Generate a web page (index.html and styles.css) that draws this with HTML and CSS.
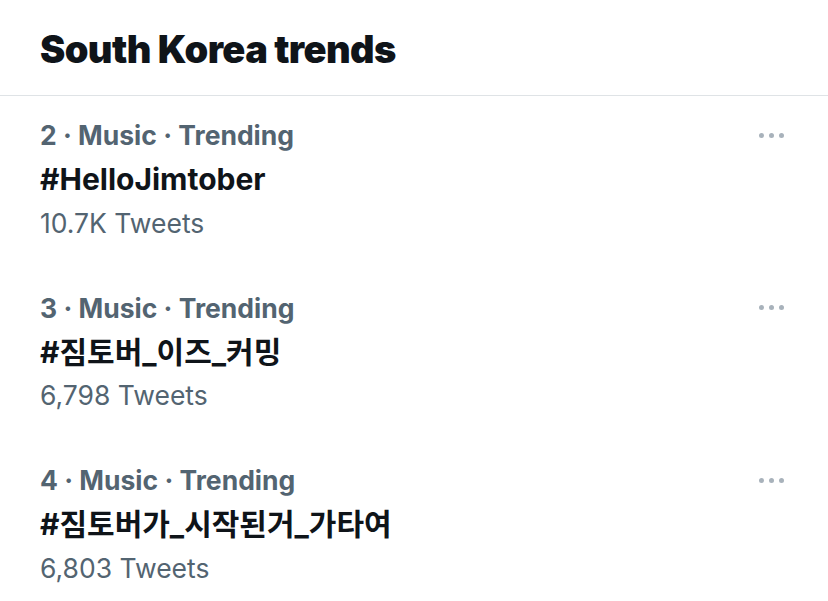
FILE: index.html
```html
<!DOCTYPE html>
<html lang="en">
<head>
<meta charset="utf-8">
<title>South Korea trends</title>
<link rel="stylesheet" href="styles.css">
</head>
<body>
<main class="panel">
  <header class="panel-header">
    <h1 class="panel-title">South Korea trends</h1>
  </header>
  <section class="trend">
    <div class="trend-meta">
      <span>2 · Music · Trending</span>
      <span class="more" aria-label="More"><i></i><i></i><i></i></span>
    </div>
    <div class="trend-name">#HelloJimtober</div>
    <div class="trend-count">10.7K Tweets</div>
  </section>
  <section class="trend">
    <div class="trend-meta">
      <span>3 · Music · Trending</span>
      <span class="more" aria-label="More"><i></i><i></i><i></i></span>
    </div>
    <div class="trend-name">#짐토버_이즈_커밍</div>
    <div class="trend-count">6,798 Tweets</div>
  </section>
  <section class="trend">
    <div class="trend-meta">
      <span>4 · Music · Trending</span>
      <span class="more" aria-label="More"><i></i><i></i><i></i></span>
    </div>
    <div class="trend-name">#짐토버가_시작된거_가타여</div>
    <div class="trend-count">6,803 Tweets</div>
  </section>
</main>
</body>
</html>
```
FILE: styles.css
```css
html, body {
  margin: 0;
  padding: 0;
  background: #ffffff;
}
body {
  font-family: Inter, "Noto Sans CJK KR", sans-serif;
  color: #0f1419;
  overflow: hidden;
}
.panel {
  width: 828px;
}
.panel-header {
  box-sizing: border-box;
  height: 96px;
  border-bottom: 1px solid #dfe3e6;
  padding: 2px 40px 0 40px;
  display: flex;
  align-items: center;
}
.panel-title {
  margin: 0;
  font-size: 38px;
  font-weight: 900;
  line-height: 60px;
  letter-spacing: -0.6px;
}
.trend {
  padding: 17px 40px 25px 40px;
}
.trend-meta {
  display: flex;
  justify-content: space-between;
  align-items: center;
  font-size: 26.5px;
  font-weight: 700;
  line-height: 44px;
  color: #536471;
}
.more {
  display: flex;
  gap: 5px;
  margin-right: 4px;
}
.more i {
  width: 5px;
  height: 5px;
  border-radius: 50%;
  background: #a8b2bb;
}
.trend-name {
  font-size: 30px;
  font-weight: 700;
  line-height: 45.5px;
}
.trend-count {
  font-size: 26.5px;
  font-weight: 400;
  line-height: 41px;
  color: #536471;
}
```
